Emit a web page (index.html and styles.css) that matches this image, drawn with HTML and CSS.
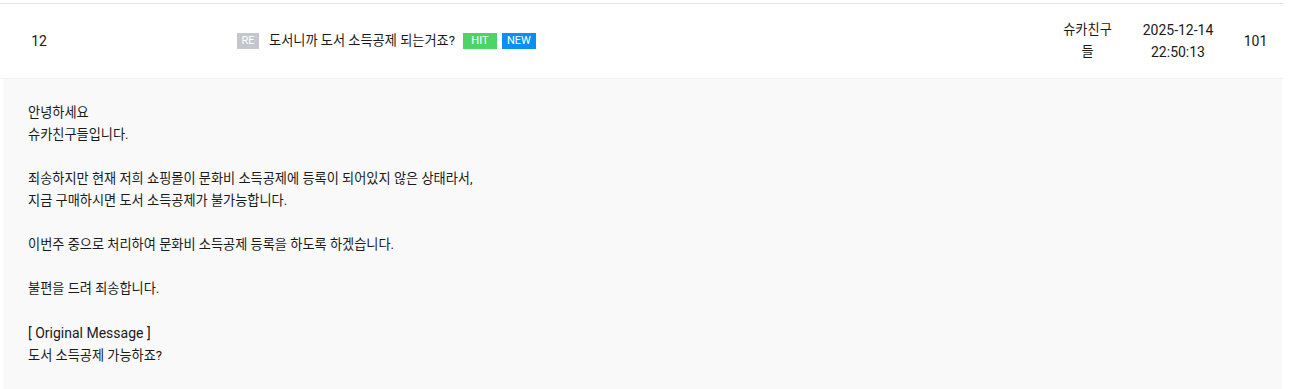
FILE: index.html
```html
<!DOCTYPE html>
<html lang="ko">
  <head>
    <meta charset="UTF-8" />
    <meta name="viewport" content="width=device-width, initial-scale=1.0" />
    <title>게시판</title>
    <link rel="stylesheet" href="styles.css">
  </head>
  <body>
    <div class="board">
      <div class="row">
        <div class="cell num en">12</div>
        <div class="cell subject">
          <span class="badge re">RE</span>
          <span class="title">도서니까 도서 소득공제 되는거죠?</span>
          <span class="badge hit">HIT</span>
          <span class="badge new">NEW</span>
        </div>
        <div class="cell writer">슈카친구들</div>
        <div class="cell date en">2025-12-14<br />22:50:13</div>
        <div class="cell hits en">101</div>
      </div>
      <div class="content">
        안녕하세요<br />
        슈카친구들입니다.<br />
        <br />
        죄송하지만 현재 저희 쇼핑몰이 문화비 소득공제에 등록이 되어있지 않은 상태라서,<br />
        지금 구매하시면 도서 소득공제가 불가능합니다.<br />
        <br />
        이번주 중으로 처리하여 문화비 소득공제 등록을 하도록 하겠습니다.<br />
        <br />
        불편을 드려 죄송합니다.<br />
        <br />
        <span class="en">[ Original Message ]</span><br />
        도서 소득공제 가능하죠?
      </div>
    </div>
  </body>
</html>
```

FILE: styles.css
```css
body {
  font-family: "Roboto", "Noto Sans CJK KR", sans-serif;
  font-size: 13.2px;
  color: #1a1a1a;
  margin: 0;
  background-color: white;
}
.en {
  font-size: 14px;
}
.board {
  width: 1283px;
  margin-top: 3px;
  border-top: 1px solid #e4e4e4;
}
.row {
  display: grid;
  grid-template-columns: 78px 1fr 71px 110px 45px;
  align-items: center;
  height: 74px;
  padding-right: 5px;
  border-bottom: 1px solid #f0f0f0;
  line-height: 22px;
}
.cell {
  text-align: center;
}
.subject {
  display: flex;
  align-items: center;
  text-align: left;
  padding-left: 159px;
}
.title {
  margin: 0 8px 0 10px;
}
.writer {
  padding: 0 10px;
}
.badge {
  display: inline-block;
  height: 16px;
  line-height: 16px;
  font-size: 11px;
  color: white;
  text-align: center;
}
.badge.re {
  background-color: #c3c6cc;
  width: 22px;
}
.badge.hit {
  background-color: #4cd466;
  width: 34px;
  margin-right: 5px;
}
.badge.new {
  background-color: #0a8ff5;
  width: 34px;
}
.content {
  margin-left: 3px;
  width: 1279px;
  box-sizing: border-box;
  background-color: #f9f9f9;
  padding: 23px 25px 30px;
  line-height: 22px;
}
```
